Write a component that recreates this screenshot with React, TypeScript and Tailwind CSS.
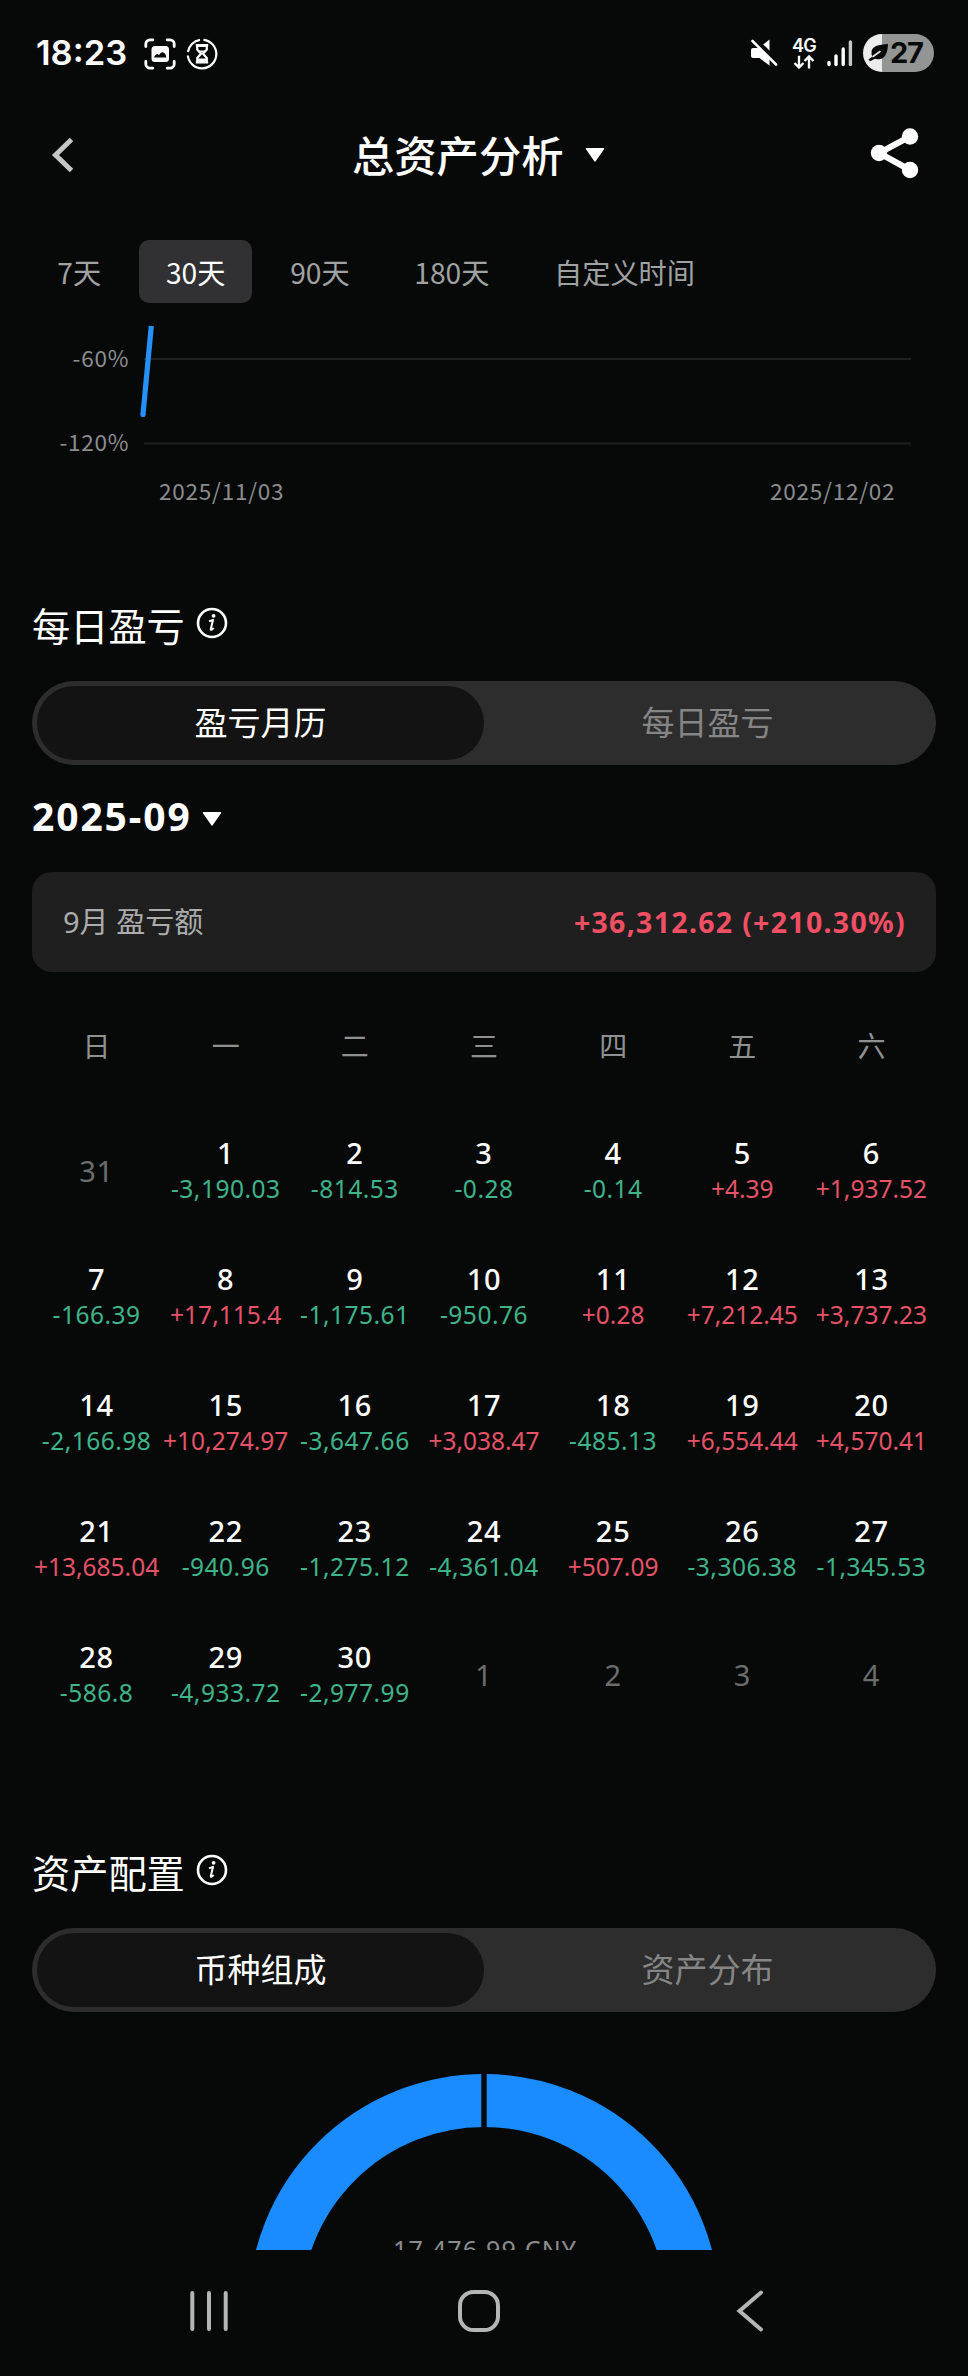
import React, { useState } from "react";

type Day = { day: number; value?: string };

const WEEKDAYS = ["日", "一", "二", "三", "四", "五", "六"];
const RANGES = ["7天", "30天", "90天", "180天", "自定义时间"];

const DAYS: Day[] = [
  { day: 31 },
  { day: 1, value: "-3,190.03" },
  { day: 2, value: "-814.53" },
  { day: 3, value: "-0.28" },
  { day: 4, value: "-0.14" },
  { day: 5, value: "+4.39" },
  { day: 6, value: "+1,937.52" },
  { day: 7, value: "-166.39" },
  { day: 8, value: "+17,115.4" },
  { day: 9, value: "-1,175.61" },
  { day: 10, value: "-950.76" },
  { day: 11, value: "+0.28" },
  { day: 12, value: "+7,212.45" },
  { day: 13, value: "+3,737.23" },
  { day: 14, value: "-2,166.98" },
  { day: 15, value: "+10,274.97" },
  { day: 16, value: "-3,647.66" },
  { day: 17, value: "+3,038.47" },
  { day: 18, value: "-485.13" },
  { day: 19, value: "+6,554.44" },
  { day: 20, value: "+4,570.41" },
  { day: 21, value: "+13,685.04" },
  { day: 22, value: "-940.96" },
  { day: 23, value: "-1,275.12" },
  { day: 24, value: "-4,361.04" },
  { day: 25, value: "+507.09" },
  { day: 26, value: "-3,306.38" },
  { day: 27, value: "-1,345.53" },
  { day: 28, value: "-586.8" },
  { day: 29, value: "-4,933.72" },
  { day: 30, value: "-2,977.99" },
  { day: 1 },
  { day: 2 },
  { day: 3 },
  { day: 4 },
];

function Caret({ className = "" }: { className?: string }) {
  return (
    <svg width="20" height="16" viewBox="0 0 20 16" className={className}>
      <path d="M1.600 1.700h16.800L10 13.800z" fill="#fff" stroke="#fff" strokeWidth="1.600" strokeLinejoin="round" />
    </svg>
  );
}

function StatusBar() {
  return (
    <div className="flex h-[106px] items-center pr-[34px] pl-[36px] font-['Inter',sans-serif]">
      <span className="w-[108px] text-[34.500px] leading-[40px] font-semibold">18:23</span>
      <svg width="32" height="32" viewBox="0 0 32 32" className="mt-[2px]">
        <g fill="none" stroke="#fff" strokeWidth="2.800" strokeLinecap="round">
          <path d="M1.800 8.500V6a4.200 4.200 0 0 1 4.200-4.200h2.800M23.200 1.800H26A4.200 4.200 0 0 1 30.200 6v2.500M30.200 23.500V26A4.200 4.200 0 0 1 26 30.200h-2.800M8.800 30.200H6A4.200 4.200 0 0 1 1.800 26v-2.500" />
        </g>
        <rect x="7.500" y="8" width="17.500" height="16" rx="3.500" fill="#fff" />
        <path d="M10 19.500c1.500-3.500 3.500-4.800 5-2.300 2-3.800 4.500-3.800 6.500-.8l1 3.100z" fill="#080a0a" />
      </svg>
      <svg width="32" height="32" viewBox="0 0 32 32" className="mt-[2px] ml-[10px]">
        <g fill="none" stroke="#fff" strokeWidth="2.200">
          <path d="M17.500 1.800A14.300 14.300 0 1 1 1.800 17.500" />
          <path d="M1.900 14A14.300 14.300 0 0 1 14 1.900" />
          <path d="M11.200 8h9.600v3.500L17 15.800l3.800 4.300v3.900h-9.600v-3.900l3.800-4.300-3.800-4.300z" strokeLinejoin="round" />
          <path d="M9.800 7.200h12.400M9.800 24.500h12.400" />
        </g>
        <path d="M11.500 20.500h9v4h-9zM13 12.500h6l-3 2.500z" fill="#fff" />
      </svg>
      <div className="ml-auto flex items-center">
        <svg width="28" height="28" viewBox="0 0 28 28">
          <path d="M1 11Q1 9 3 9h6L19.500 0.500V26.500L9.500 19H3Q1 19 1 17z" fill="#fff" />
          <path d="M3 -1.500L29 24" stroke="#080a0a" strokeWidth="4.500" />
          <path d="M2.500 2L26 25.500" stroke="#fff" strokeWidth="2.600" strokeLinecap="round" />
        </svg>
        <div className="ml-[14px] flex w-[24px] flex-col items-center">
          <span className="text-[18px] leading-[17px] font-semibold tracking-[-0.800px]">4G</span>
          <svg width="22" height="14" viewBox="0 0 22 14" className="mt-[1px]">
            <path d="M6 .800v11.500M1.500 8L6 12.500 10.500 8M16 13.500V1.800M11.500 6L16 1.500 20.500 6" fill="none" stroke="#fff" strokeWidth="2.400" />
          </svg>
        </div>
        <svg width="26" height="27" viewBox="0 0 26 27" className="ml-[11px]">
          <g stroke="#fff" strokeWidth="3.400" strokeLinecap="round">
            <path d="M2 22.500v2M9 16v8.500M16.200 9v15.500" />
            <path d="M23.400 2v22.500" stroke="#c8caca" />
          </g>
        </svg>
        <div className="ml-[10px] flex h-[38px] w-[71px] items-center rounded-full bg-linear-to-r from-[#ececec] from-27% to-[#929594] to-27% pl-[5px] text-[#080a0a]">
          <svg width="21" height="20" viewBox="0 0 21 20">
            <path d="M20 1C11 1.500 3 3 3.500 10c0 1.500.3 2.500 1 3.500L.5 16.500l1.500 1.800 5-2.600C14 18 19.500 14 20 1z" fill="#080a0a" />
            <path d="M5 13.500L12 8.500" stroke="#e4e4e4" strokeWidth="1.600" strokeLinecap="round" />
          </svg>
          <span className="ml-[1px] text-[29px] leading-[38px] font-bold tracking-[-1.200px]">27</span>
        </div>
      </div>
    </div>
  );
}

function Header() {
  return (
    <header className="flex h-[98px] items-center pr-[49px] pl-[50px]">
      <svg width="26" height="36" viewBox="0 0 26 36">
        <path d="M21.500 2.500L5.500 18l16 15.500" fill="none" stroke="#c6c6c6" strokeWidth="5" />
      </svg>
      <h1 className="ml-[276px] pt-[1px] text-[42.300px] leading-[60px] font-medium">总资产分析</h1>
      <Caret className="ml-[21px]" />
      <svg width="50" height="52" viewBox="0 0 50 52" className="mt-[-4px] ml-auto">
        <path d="M41 9.500L10 26l31 17" fill="none" stroke="#fff" strokeWidth="6" />
        <g fill="#fff">
          <circle cx="41" cy="9.500" r="8.200" />
          <circle cx="10" cy="26" r="8.200" />
          <circle cx="41" cy="43" r="8.200" />
        </g>
      </svg>
    </header>
  );
}

function RangeTabs() {
  const [active, setActive] = useState("30天");
  return (
    <div className="mt-[36px] flex gap-[12px] pl-[31px] font-['Noto_Sans_CJK_SC',sans-serif] text-[28.200px]">
      {RANGES.map((r) => (
        <button
          key={r}
          onClick={() => setActive(r)}
          className={
            r === active
              ? "h-[63px] rounded-[10px] bg-[#313134] px-[26.500px] pt-[1px] leading-[62px] text-white"
              : "h-[63px] rounded-[10px] px-[26.300px] pt-[1px] leading-[62px] text-[#a0a2a2]"
          }
        >
          {r}
        </button>
      ))}
    </div>
  );
}

function ReturnChart() {
  return (
    <svg width="968" height="213" viewBox="0 303 968 213" className="block">
      <path d="M144 359h767M144 443.500h767" stroke="#1e2020" strokeWidth="2" />
      <path d="M151.300 326L143 414.500" stroke="#2490f8" strokeWidth="5.200" />
      <circle cx="143" cy="414.500" r="2.600" fill="#2490f8" />
      <g className="fill-[#8b8d8d] font-['Noto_Sans_CJK_SC',sans-serif] text-[22.500px]">
        <text x="72.500" y="367" textLength="56">-60%</text>
        <text x="59.500" y="451" textLength="69">-120%</text>
        <text x="159" y="500" textLength="124.500">2025/11/03</text>
        <text x="770" y="500" textLength="124.500">2025/12/02</text>
      </g>
    </svg>
  );
}

function SectionTitle({ children }: { children: React.ReactNode }) {
  return (
    <div className="flex h-[60px] items-center pl-[32px]">
      <h2 className="text-[38.200px] leading-[60px]">{children}</h2>
      <svg width="32" height="32" viewBox="0 0 32 32" className="mt-[-7px] ml-[11px]">
        <circle cx="16" cy="16" r="14" fill="none" stroke="#fff" strokeWidth="2.600" />
        <circle cx="17.600" cy="8.800" r="1.900" fill="#fff" />
        <path d="M13 14.200c1.700-.4 2.900-.8 4-1.300l-2.200 9c-.3 1.300.9 1 2.900-.8" fill="none" stroke="#fff" strokeWidth="2" strokeLinejoin="round" />
      </svg>
    </div>
  );
}

function Segmented({ left, right }: { left: string; right: string }) {
  return (
    <div className="mx-[32px] mt-[25px] flex h-[84px] rounded-full bg-[#2d2d2d] p-[5px] text-[33px] leading-[72px]">
      <button className="w-1/2 rounded-full bg-[#131313] pb-[1px] text-white">{left}</button>
      <button className="w-1/2 pb-[1px] text-[#858585]">{right}</button>
    </div>
  );
}

function Calendar() {
  return (
    <div className="px-[32px]">
      <div className="grid h-[136px] grid-cols-7 items-center pt-[11px] text-center text-[28px] text-[#8f9191]">
        {WEEKDAYS.map((w) => (
          <span key={w}>{w}</span>
        ))}
      </div>
      <div className="grid grid-cols-7">
        {DAYS.map((d, i) => (
          <div key={i} className="flex h-[126px] flex-col items-center justify-center whitespace-nowrap">
            <span
              className={
                d.value
                  ? "text-[29px] leading-[36px] font-medium tracking-[0.700px]"
                  : "text-[29px] leading-[36px] tracking-[0.700px] text-[#6c6e6e]"
              }
            >
              {d.day}
            </span>
            {d.value && (
              <span
                className={
                  d.value.startsWith("+")
                    ? "text-[24.500px] leading-[36px] text-[#e45367]"
                    : "text-[24.500px] leading-[36px] tracking-[0.500px] text-[#3fb489]"
                }
              >
                {d.value}
              </span>
            )}
          </div>
        ))}
      </div>
    </div>
  );
}

function Donut() {
  return (
    <svg width="968" height="238" viewBox="0 2012 968 238" className="block">
      <circle cx="484" cy="2309.700" r="209.200" fill="none" stroke="#1a8cff" strokeWidth="53" />
      <path d="M484 2070v62" stroke="#070909" strokeWidth="5.400" />
      <text x="393" y="2259" textLength="183" className="fill-[#8b8d8d] text-[25px]">
        17,476.99 CNY
      </text>
    </svg>
  );
}

function NavBar() {
  return (
    <nav className="flex h-[126px] items-center pb-[4px] pl-[189px]">
      <svg width="40" height="44" viewBox="0 0 40 44">
        <path d="M3.300 4v36M20 4v36M36.700 4v36" stroke="#b4b6b5" strokeWidth="4" strokeLinecap="round" />
      </svg>
      <svg width="44" height="44" viewBox="0 0 44 44" className="ml-[228px]">
        <rect x="3" y="3" width="38" height="38" rx="13.500" fill="none" stroke="#b4b6b5" strokeWidth="4" />
      </svg>
      <svg width="30" height="44" viewBox="0 0 30 44" className="ml-[234px]">
        <path d="M26 3.500L4.500 22 26 40.500" fill="none" stroke="#b4b6b5" strokeWidth="4" strokeLinecap="round" />
      </svg>
    </nav>
  );
}

export default function App() {
  return (
    <div className="flex h-[2376px] w-[968px] flex-col overflow-hidden bg-[#070909] font-['Noto_Sans','Noto_Sans_CJK_SC',sans-serif] text-white">
      <StatusBar />
      <Header />
      <RangeTabs />
      <ReturnChart />
      <div className="h-[80px]" />
      <SectionTitle>每日盈亏</SectionTitle>
      <Segmented left="盈亏月历" right="每日盈亏" />
      <button className="flex h-[102px] items-center pl-[32px]">
        <span className="text-[39px] leading-[60px] font-bold tracking-[1.900px]">2025-09</span>
        <Caret className="mt-[6px] ml-[10px]" />
      </button>
      <div className="mx-[32px] mt-[5px] flex h-[100px] items-center justify-between rounded-[20px] bg-[#1f1f1f] pr-[30px] pl-[31px] text-[29px]">
        <span className="text-[#acacac]">9月 盈亏额</span>
        <span className="text-[28.500px] font-bold tracking-[1.300px] text-[#f04f64]">+36,312.62 (+210.30%)</span>
      </div>
      <Calendar />
      <div className="h-[105px]" />
      <SectionTitle>资产配置</SectionTitle>
      <Segmented left="币种组成" right="资产分布" />
      <Donut />
      <NavBar />
    </div>
  );
}
